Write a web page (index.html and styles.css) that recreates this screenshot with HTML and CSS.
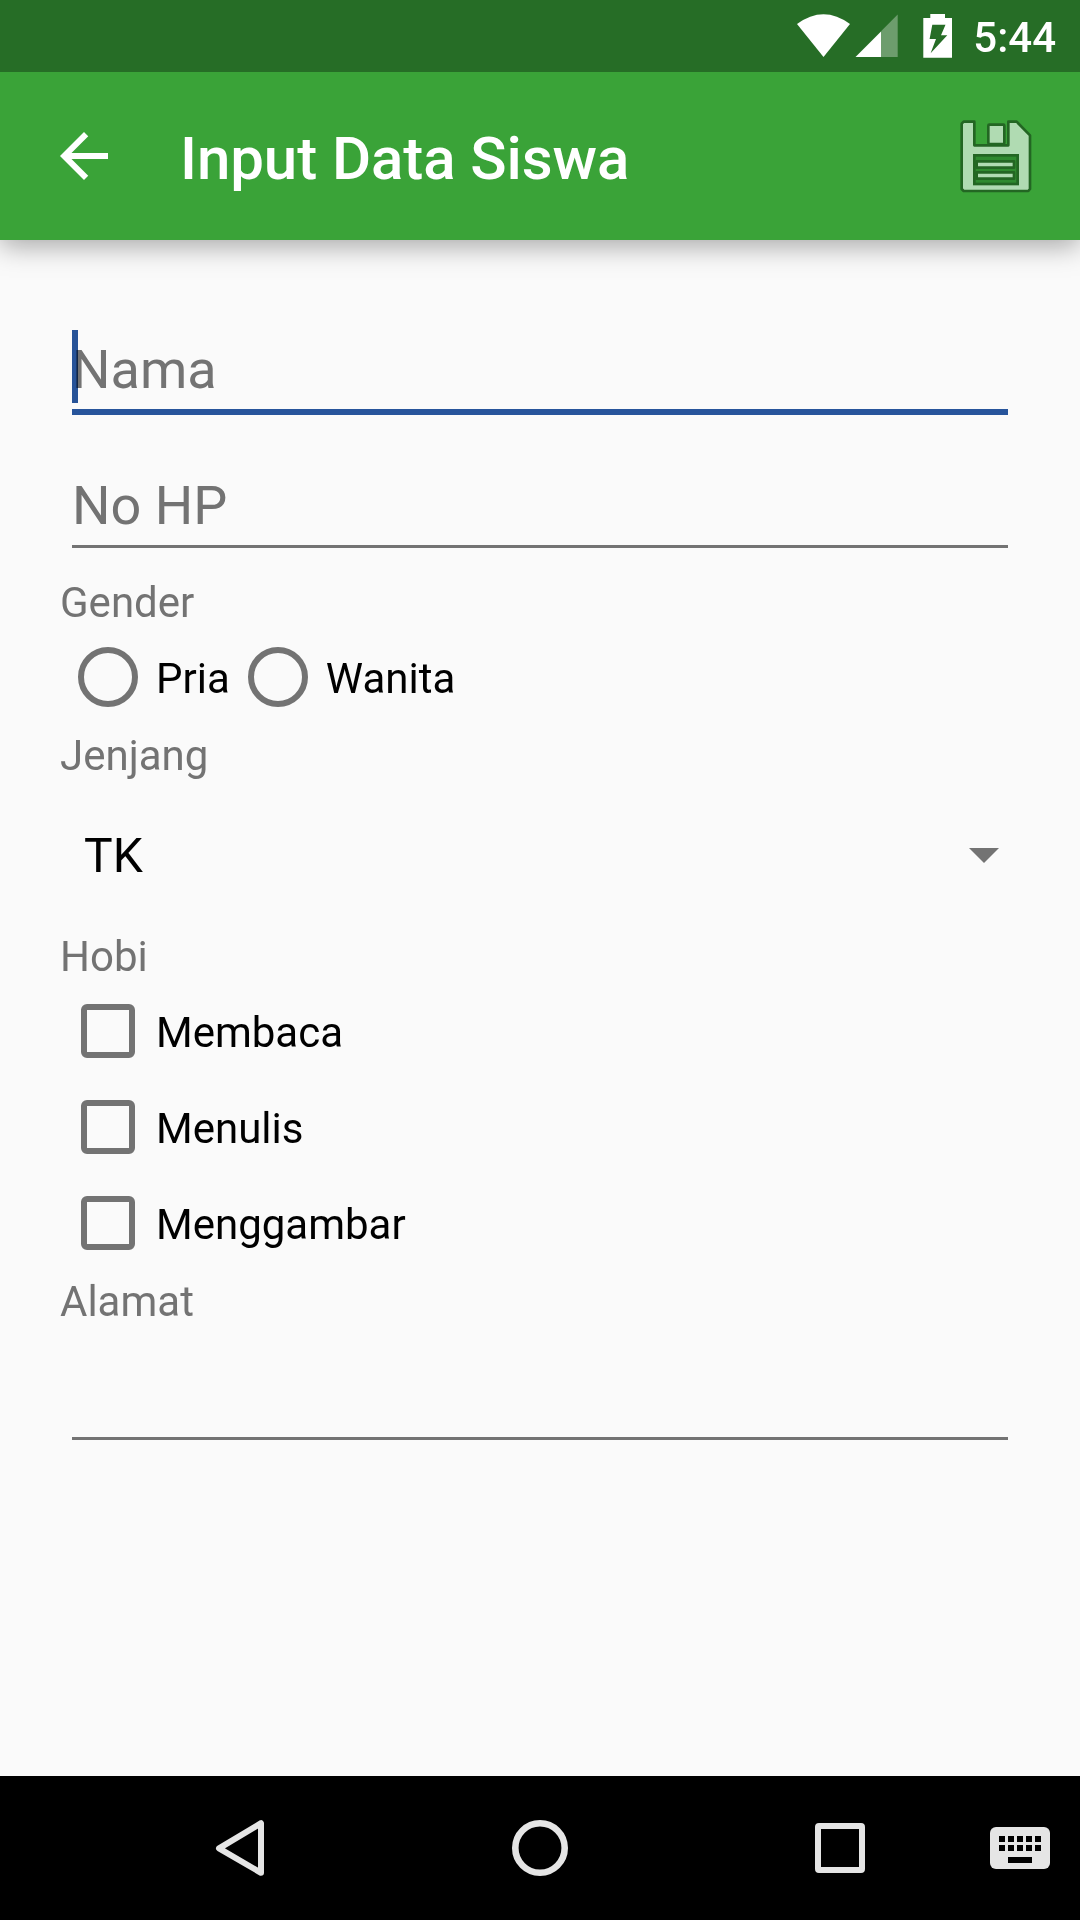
FILE: index.html
```html
<!DOCTYPE html>
<html lang="id">
<head>
<meta charset="utf-8">
<title>Input Data Siswa</title>
<link rel="stylesheet" href="styles.css">
</head>
<body>
<div class="screen">
  <div class="status-bar">
    <svg class="status-icons" viewBox="0 0 165 72" aria-hidden="true">
      <path fill="#fff" d="M10 24Q36.500 4.500 63 24L36.500 57Z"/>
      <path fill="#fff" fill-opacity=".33" d="M110.700 14.500V57H94V31.200Z"/>
      <path fill="#fff" d="M68.500 57L94 31.500V57Z"/>
      <path fill="#fff" d="M143.300 14H158V18H165V57.700H136.300V18H143.300Z"/>
      <path fill="#266d26" d="M145.300 24.700H158.500L154 35.300H160.300L143.600 53.300L149 39H142.600Z"/>
    </svg>
    <span class="clock">5:44</span>
  </div>

  <header class="app-bar">
    <svg class="back" viewBox="0 0 24 24" aria-hidden="true"><path fill="#fff" d="M20 11H7.830l5.590-5.590L12 4l-8 8 8 8 1.410-1.410L7.830 13H20z"/></svg>
    <h1 class="title">Input Data Siswa</h1>
    <svg class="save" viewBox="0 0 330 330" aria-hidden="true">
      <g fill="#b0dbb2" stroke="#236623" stroke-width="8" stroke-linejoin="round">
        <path d="M71 65H103V136H205V65H230L270 106V267L265 273H71L65 267V71Z"/>
        <rect x="145" y="74" width="48" height="58" rx="3"/>
        <rect x="103" y="166" width="130" height="86" fill="#2f8a2f" stroke-linejoin="miter"/>
        <rect x="110" y="184" width="112" height="19"/>
        <rect x="110" y="217" width="112" height="19"/>
      </g>
    </svg>
  </header>

  <main class="form">
    <div class="edit focused"><span class="caret"></span>Nama</div>
    <div class="edit">No HP</div>

    <div class="label">Gender</div>
    <div class="radios">
      <div class="option"><span class="mark"><i class="radio"></i></span>Pria</div>
      <div class="option"><span class="mark"><i class="radio"></i></span>Wanita</div>
    </div>

    <div class="label">Jenjang</div>
    <div class="spinner">
      <span>TK</span>
      <svg class="arrow" viewBox="0 0 30 15" aria-hidden="true"><path fill="#737373" d="M0 0H30L15 15Z"/></svg>
    </div>

    <div class="label">Hobi</div>
    <div class="option"><span class="mark"><i class="check"></i></span>Membaca</div>
    <div class="option"><span class="mark"><i class="check"></i></span>Menulis</div>
    <div class="option"><span class="mark"><i class="check"></i></span>Menggambar</div>

    <div class="label">Alamat</div>
    <div class="edit"></div>
  </main>

  <nav class="nav-bar">
    <svg class="nav-icon" viewBox="0 0 84 84" aria-hidden="true"><path fill="none" stroke="#e5e5e5" stroke-width="6" stroke-linejoin="round" d="M63 17.200V66.800L21 42.300Z"/></svg>
    <svg class="nav-icon" viewBox="0 0 84 84" aria-hidden="true"><circle cx="42" cy="42" r="24.700" fill="none" stroke="#e5e5e5" stroke-width="6.600"/></svg>
    <svg class="nav-icon" viewBox="0 0 84 84" aria-hidden="true"><path fill="#e5e5e5" fill-rule="evenodd" d="M21 17H63a4 4 0 0 1 4 4V63a4 4 0 0 1-4 4H21a4 4 0 0 1-4-4V21a4 4 0 0 1 4-4ZM23 23V61H61V23Z"/></svg>
    <svg class="keyboard" viewBox="0 0 60 42" aria-hidden="true">
      <rect width="60" height="42" rx="6" fill="#e5e5e5"/>
      <path d="M9 9h6v6H9zM18 9h6v6h-6zM27 9h6v6h-6zM36 9h6v6h-6zM45 9h6v6h-6zM9 18h6v6H9zM18 18h6v6h-6zM27 18h6v6h-6zM36 18h6v6h-6zM45 18h6v6h-6zM18 30h24v6H18z"/>
    </svg>
  </nav>
</div>
</body>
</html>
```
FILE: styles.css
```css
* {
  box-sizing: border-box;
}

body {
  margin: 0;
  font-family: Roboto, sans-serif;
  background: #fafafa;
}

.screen {
  display: flex;
  flex-direction: column;
  width: 1080px;
  height: 1920px;
  overflow: hidden;
}

.status-bar {
  position: relative;
  z-index: 1;
  display: flex;
  justify-content: flex-end;
  height: 72px;
  padding-right: 24px;
  background: #266d26;
  color: #fff;
}

.status-icons {
  width: 165px;
  height: 72px;
  margin-right: 21px;
}

.clock {
  padding-top: 3px;
  font-size: 42px;
  font-weight: 500;
  line-height: 69px;
}

.app-bar {
  display: flex;
  height: 168px;
  padding: 0 30px 0 48px;
  background: #3aa338;
  color: #fff;
  box-shadow: 0 6px 26px rgba(0, 0, 0, .34);
}

.back {
  width: 72px;
  height: 72px;
  margin: 48px 60px 0 0;
}

.title {
  flex: 1;
  margin: 0;
  padding-top: 5px;
  font-size: 60px;
  font-weight: 500;
  line-height: 163px;
  letter-spacing: -.08px;
}

.save {
  width: 110px;
  height: 110px;
  margin-top: 28px;
}

.form {
  flex: 1;
  padding: 60px;
}

.edit {
  position: relative;
  height: 136px;
  padding: 36px 12px 0;
  font-size: 54px;
  line-height: 67px;
  color: #737373;
}

.edit::after {
  content: "";
  position: absolute;
  left: 12px;
  right: 12px;
  bottom: 24px;
  height: 3px;
  background: #737373;
}

.edit.focused::after {
  bottom: 21px;
  height: 6px;
  background: #27549b;
}

.caret {
  position: absolute;
  left: 12px;
  top: 30px;
  width: 6px;
  height: 73px;
  background: #27549b;
  mix-blend-mode: multiply;
}

.label {
  height: 57px;
  padding-top: 4px;
  font-size: 42px;
  line-height: 53px;
  color: #737373;
}

.radios {
  display: flex;
}

.option {
  display: flex;
  height: 96px;
  padding-top: 3px;
  font-size: 42px;
  line-height: 93px;
  color: #000;
}

.mark {
  display: flex;
  align-items: center;
  justify-content: center;
  width: 96px;
  height: 96px;
  margin-top: -3px;
}

.radio {
  width: 60px;
  height: 60px;
  border: 6px solid #737373;
  border-radius: 50%;
}

.check {
  width: 54px;
  height: 54px;
  border: 6px solid #737373;
  border-radius: 6px;
}

.spinner {
  display: flex;
  justify-content: space-between;
  height: 144px;
  padding: 3px 21px 0 24px;
  font-size: 48px;
  line-height: 141px;
  color: #000;
}

.arrow {
  width: 30px;
  height: 15px;
  margin-top: 63px;
}

.nav-bar {
  display: grid;
  grid-template-columns: 300px 300px 300px 60px;
  align-items: center;
  justify-items: center;
  height: 144px;
  padding-left: 90px;
  background: #000;
}

.nav-icon {
  width: 84px;
  height: 84px;
}

.keyboard {
  width: 60px;
  height: 42px;
}
```
